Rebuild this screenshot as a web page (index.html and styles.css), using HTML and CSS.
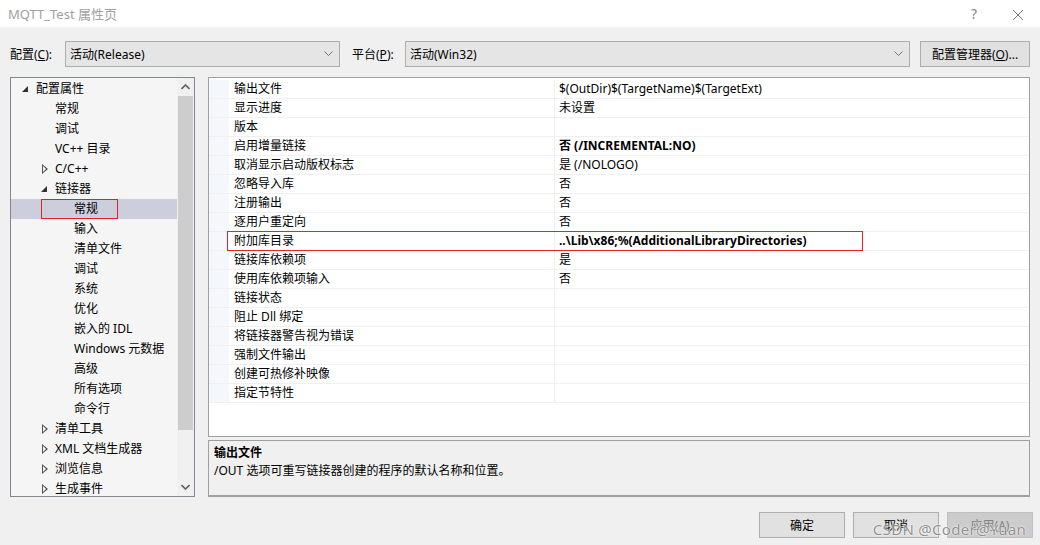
FILE: index.html
```html
<!DOCTYPE html>
<html lang="zh-CN">
<head>
    <meta charset="UTF-8">
    <title>MQTT_Test 属性页</title>
    <link rel="stylesheet" href="styles.css">
</head>
<body>
    <div class="window">
        <div class="titlebar">
            <span class="title">MQTT_Test 属性页</span>
            <span class="tb-btn help">?</span>
            <span class="tb-btn close">
                <svg width="12" height="12" viewBox="0 0 12 12"><path d="M1 1L11 11M11 1L1 11" stroke="#777" stroke-width="1"/></svg>
            </span>
        </div>

        <div class="toolbar">
            <label class="lbl">配置(<u>C</u>):</label>
            <div class="combo combo-config">
                <span>活动(Release)</span>
                <svg class="chev" width="9" height="6" viewBox="0 0 9 6"><path d="M0.5 0.5L4.5 4.5L8.5 0.5" fill="none" stroke="#777"/></svg>
            </div>
            <label class="lbl lbl-plat">平台(<u>P</u>):</label>
            <div class="combo combo-plat">
                <span>活动(Win32)</span>
                <svg class="chev" width="9" height="6" viewBox="0 0 9 6"><path d="M0.5 0.5L4.5 4.5L8.5 0.5" fill="none" stroke="#777"/></svg>
            </div>
            <button class="btn btn-mgr">配置管理器(<u>O</u>)...</button>
        </div>

        <div class="main">
            <div class="tree">
                <ul class="tree-list">
                    <li class="lv0"><i class="tri open"></i>配置属性</li>
                    <li class="lv1">常规</li>
                    <li class="lv1">调试</li>
                    <li class="lv1">VC++ 目录</li>
                    <li class="lv1"><i class="tri closed"></i>C/C++</li>
                    <li class="lv1"><i class="tri open"></i>链接器</li>
                    <li class="lv2 sel"><span class="mark">常规</span></li>
                    <li class="lv2">输入</li>
                    <li class="lv2">清单文件</li>
                    <li class="lv2">调试</li>
                    <li class="lv2">系统</li>
                    <li class="lv2">优化</li>
                    <li class="lv2">嵌入的 IDL</li>
                    <li class="lv2">Windows 元数据</li>
                    <li class="lv2">高级</li>
                    <li class="lv2">所有选项</li>
                    <li class="lv2">命令行</li>
                    <li class="lv1"><i class="tri closed"></i>清单工具</li>
                    <li class="lv1"><i class="tri closed"></i>XML 文档生成器</li>
                    <li class="lv1"><i class="tri closed"></i>浏览信息</li>
                    <li class="lv1"><i class="tri closed"></i>生成事件</li>
                </ul>
                <div class="scrollbar">
                    <div class="sb-arrow">
                        <svg width="9" height="6" viewBox="0 0 9 6"><path d="M0.5 5L4.5 1L8.5 5" fill="none" stroke="#606060" stroke-width="1.6"/></svg>
                    </div>
                    <div class="sb-track"><div class="sb-thumb"></div></div>
                    <div class="sb-arrow">
                        <svg width="9" height="6" viewBox="0 0 9 6"><path d="M0.5 1L4.5 5L8.5 1" fill="none" stroke="#606060" stroke-width="1.6"/></svg>
                    </div>
                </div>
            </div>

            <div class="right">
                <div class="grid">
                    <div class="row"><div class="gut"></div><div class="name">输出文件</div><div class="val">$(OutDir)$(TargetName)$(TargetExt)</div></div>
                    <div class="row"><div class="gut"></div><div class="name">显示进度</div><div class="val">未设置</div></div>
                    <div class="row"><div class="gut"></div><div class="name">版本</div><div class="val"></div></div>
                    <div class="row"><div class="gut"></div><div class="name">启用增量链接</div><div class="val b">否 (/INCREMENTAL:NO)</div></div>
                    <div class="row"><div class="gut"></div><div class="name">取消显示启动版权标志</div><div class="val">是 (/NOLOGO)</div></div>
                    <div class="row"><div class="gut"></div><div class="name">忽略导入库</div><div class="val">否</div></div>
                    <div class="row"><div class="gut"></div><div class="name">注册输出</div><div class="val">否</div></div>
                    <div class="row"><div class="gut"></div><div class="name">逐用户重定向</div><div class="val">否</div></div>
                    <div class="row hl"><div class="gut"></div><div class="name">附加库目录</div><div class="val b">..\Lib\x86;%(AdditionalLibraryDirectories)</div></div>
                    <div class="row"><div class="gut"></div><div class="name">链接库依赖项</div><div class="val">是</div></div>
                    <div class="row"><div class="gut"></div><div class="name">使用库依赖项输入</div><div class="val">否</div></div>
                    <div class="row"><div class="gut"></div><div class="name">链接状态</div><div class="val"></div></div>
                    <div class="row"><div class="gut"></div><div class="name">阻止 Dll 绑定</div><div class="val"></div></div>
                    <div class="row"><div class="gut"></div><div class="name">将链接器警告视为错误</div><div class="val"></div></div>
                    <div class="row"><div class="gut"></div><div class="name">强制文件输出</div><div class="val"></div></div>
                    <div class="row"><div class="gut"></div><div class="name">创建可热修补映像</div><div class="val"></div></div>
                    <div class="row"><div class="gut"></div><div class="name">指定节特性</div><div class="val"></div></div>
                </div>
                <div class="desc">
                    <div class="desc-title">输出文件</div>
                    <div class="desc-text">/OUT 选项可重写链接器创建的程序的默认名称和位置。</div>
                </div>
            </div>
        </div>

        <div class="footer">
            <button class="btn">确定</button>
            <button class="btn">取消</button>
            <button class="btn disabled">应用(<u>A</u>)</button>
            <span class="watermark">CSDN @Coder@Yuan</span>
        </div>
    </div>
</body>
</html>
```

FILE: styles.css
```css
html, body {
    margin: 0;
    padding: 0;
}

body {
    font-family: "Noto Sans", "Noto Sans CJK SC", sans-serif;
    font-size: 12px;
    color: #000;
    background: #f0f0f0;
}

.window {
    width: 1040px;
    height: 545px;
    position: relative;
    overflow: hidden;
}

u {
    text-decoration: underline;
    text-underline-offset: 1px;
}

/* title bar */
.titlebar {
    height: 27px;
    background: #fff;
    display: flex;
    align-items: center;
    padding-left: 8px;
}

.title {
    color: #a0a0a0;
    font-size: 13px;
    flex: 1;
}

.tb-btn {
    width: 44px;
    text-align: center;
    color: #8a8a8a;
    font-size: 14px;
}

.close {
    display: flex;
    justify-content: center;
    padding-top: 2px;
}

/* toolbar */
.toolbar {
    display: flex;
    align-items: center;
    padding: 14px 0 0 10px;
    height: 26px;
}

.lbl {
    width: 55px;
}

.lbl-plat {
    width: 53px;
    margin-left: 12px;
}

.combo {
    height: 26px;
    box-sizing: border-box;
    border: 1px solid #adadad;
    background: #e5e5e5;
    display: flex;
    align-items: center;
    justify-content: space-between;
    padding: 0 6px 0 4px;
}

.combo-config {
    width: 275px;
}

.combo-plat {
    width: 505px;
}

.btn {
    height: 26px;
    box-sizing: border-box;
    border: 1px solid #adadad;
    background: #e1e1e1;
    font-family: inherit;
    font-size: 12px;
    color: #000;
    padding: 0;
}

.btn-mgr {
    width: 110px;
    margin-left: 10px;
}

/* main area */
.main {
    display: flex;
    gap: 13px;
    margin-top: 10px;
    padding-left: 10px;
    height: 420px;
}

.tree {
    width: 185px;
    box-sizing: border-box;
    border: 1px solid #828790;
    background: #f5f5f5;
    display: flex;
}

.tree-list {
    list-style: none;
    margin: 0;
    padding: 1px 0 0;
    flex: 1;
    overflow: hidden;
}

.tree-list li {
    height: 20px;
    line-height: 20px;
    white-space: nowrap;
    display: flex;
    align-items: center;
}

.lv0 {
    padding-left: 25px;
}

.lv1 {
    padding-left: 44px;
}

.lv2 {
    padding-left: 63px;
}

.tri {
    display: inline-block;
    width: 11px;
    margin-left: -14px;
    margin-right: 3px;
    height: 8px;
    position: relative;
}

.tri.open::before {
    content: "";
    position: absolute;
    left: 0;
    top: 1px;
    border-style: solid;
    border-width: 0 0 6px 6px;
    border-color: transparent transparent #333 transparent;
}

.tri.closed::before {
    content: "";
    position: absolute;
    left: 1px;
    top: -1px;
    width: 0;
    height: 0;
    border-style: solid;
    border-width: 5px 0 5px 6px;
    border-color: transparent transparent transparent #555;
}

.tri.closed::after {
    content: "";
    position: absolute;
    left: 2px;
    top: 1px;
    border-style: solid;
    border-width: 3px 0 3px 3.5px;
    border-color: transparent transparent transparent #f5f5f5;
}

.tree-list li.sel {
    background: #cccedb;
}

.mark {
    display: inline-block;
    box-sizing: border-box;
    width: 77px;
    height: 20px;
    line-height: 18px;
    margin-left: -33px;
    padding-left: 32px;
    border: 1px solid #e81c24;
}

.scrollbar {
    width: 17px;
    background: #f0f0f0;
    display: flex;
    flex-direction: column;
}

.sb-arrow {
    height: 18px;
    display: flex;
    align-items: center;
    justify-content: center;
}

.sb-track {
    flex: 1;
    padding: 0 1px;
}

.sb-thumb {
    height: 334px;
    background: #cdcdcd;
}

/* property grid */
.right {
    width: 822px;
    display: flex;
    flex-direction: column;
    gap: 3px;
}

.grid {
    height: 360px;
    box-sizing: border-box;
    border: 1px solid #a0a0a0;
    background: #fff;
    padding-top: 2px;
}

.row {
    display: flex;
    height: 19px;
    box-sizing: border-box;
    border-bottom: 1px solid #f0f0f0;
    line-height: 18px;
    position: relative;
}

.gut {
    width: 20px;
    background: #f4f7fc;
}

.name {
    width: 326px;
    padding-left: 5px;
    box-sizing: border-box;
    border-right: 1px solid #f0f0f0;
}

.val {
    flex: 1;
    padding-left: 4px;
}

.b {
    font-weight: bold;
}

.row.hl::after {
    content: "";
    position: absolute;
    left: 18px;
    top: -1px;
    width: 636px;
    height: 20px;
    box-sizing: border-box;
    border: 1px solid #e3242b;
}

.desc {
    height: 57px;
    box-sizing: border-box;
    border: 1px solid #a0a0a0;
    border-bottom-width: 2px;
    background: #f0f0f0;
    padding: 3px 5px;
    line-height: 18px;
}

.desc-title {
    font-weight: bold;
}

/* footer */
.footer {
    display: flex;
    justify-content: flex-end;
    gap: 8px;
    padding: 15px 7px 0 0;
    position: relative;
}

.footer .btn {
    width: 86px;
}

.btn.disabled {
    background: #cccccc;
    border-color: #bfbfbf;
    color: #838383;
}

.watermark {
    position: absolute;
    right: 14px;
    top: 22px;
    font-size: 15px;
    color: rgba(95, 95, 95, 0.7);
    text-shadow: 0 0 2px #fff, 0 0 1px #fff;
    letter-spacing: 0.3px;
}
```
